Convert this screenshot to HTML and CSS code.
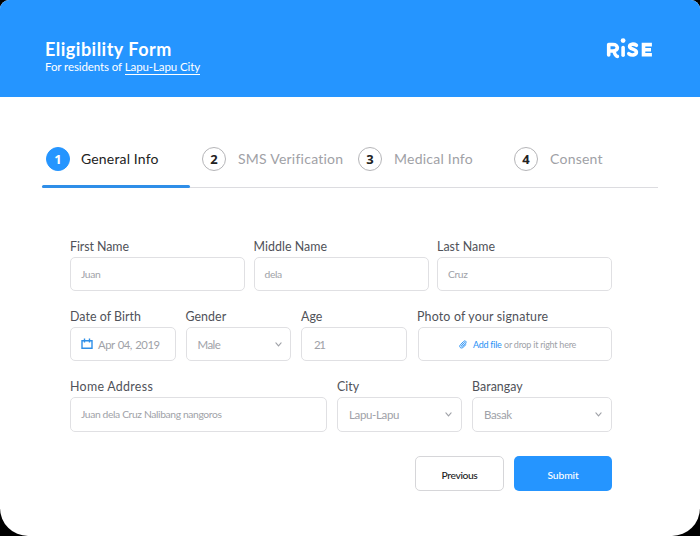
FILE: index.html
```html
<!DOCTYPE html>
<html lang="en">
<head>
<meta charset="utf-8">
<title>Eligibility Form</title>
<link rel="stylesheet" href="styles.css">
</head>
<body>
<div class="card">
  <header class="header">
    <div>
      <h1 class="title">Eligibility Form</h1>
      <p class="subtitle">For residents of <span class="place">Lapu-Lapu City</span></p>
    </div>
    <svg class="logo" width="48" height="22" viewBox="0 0 48 22" fill="none" stroke="#fff" stroke-width="3.6" stroke-linecap="round" stroke-linejoin="round" role="img" aria-label="RiSE">
      <path d="M3.7 17V6.5H8C13.8 6.5 13.8 13 8 13H3.8M9 13.5C9.8 16 10.6 18.4 12.4 18.4"/>
      <path d="M18.1 9.5V17.2"/>
      <circle cx="18.1" cy="2.6" r="2.4" fill="#fff" stroke="none"/>
      <path d="M31.4 7.3C28.9 5.6 24.6 5.7 24.6 8.6C24.6 11.5 31.4 10.8 31.4 14C31.4 17.3 26.6 17.8 23.8 15.7"/>
      <path stroke-linecap="butt" stroke-linejoin="miter" d="M46.9 6.6H38.5V16.7H46.9M38.5 11.7H46"/>
    </svg>
  </header>
  <nav class="steps">
    <div class="step active"><span class="num">1</span><span class="name">General Info</span></div>
    <div class="step"><span class="num">2</span><span class="name">SMS Verification</span></div>
    <div class="step"><span class="num">3</span><span class="name">Medical Info</span></div>
    <div class="step"><span class="num">4</span><span class="name">Consent</span></div>
  </nav>
  <form class="form">
    <div class="row names">
      <div class="field"><span class="label first">First Name</span><div class="box small">Juan</div></div>
      <div class="field"><span class="label">Middle Name</span><div class="box small">dela</div></div>
      <div class="field"><span class="label">Last Name</span><div class="box small">Cruz</div></div>
    </div>
    <div class="row details">
      <div class="field"><span class="label">Date of Birth</span><div class="box date">
        <svg width="12" height="12" viewBox="0 0 12 12" fill="none" stroke="#2e8fe8" stroke-width="1.4"><path d="M1 2.8H11V10.3H1ZM3.5 .6V4.4M8.5 .6V4.4"/></svg>
        <span>Apr 04, 2019</span></div></div>
      <div class="field"><span class="label">Gender</span><div class="box select"><span>Male</span><svg class="chevron" width="7" height="5" viewBox="0 0 7 5"><path d="M.9 .8L3.5 3.8L6.1 .8"/></svg></div></div>
      <div class="field"><span class="label">Age</span><div class="box age">21</div></div>
      <div class="field"><span class="label photo">Photo of your signature</span><div class="box drop">
        <svg width="8" height="9" viewBox="0 0 8 9" fill="none" stroke="#2690f5" stroke-width="1" stroke-linecap="round"><path d="M5.4 2.5L2.6 5.3C2 6.2 3 6.8 3.7 6.1L6.7 3.1C8 1.6 5.9 .1 4.7 1.4L1.5 4.6C-.5 6.8 2 9.2 4.1 7.3L7 4.5"/></svg>
        <span class="add">Add file</span><span>or drop it right here</span></div></div>
    </div>
    <div class="row address">
      <div class="field"><span class="label home">Home Address</span><div class="box small">Juan dela Cruz Nalibang nangoros</div></div>
      <div class="field"><span class="label">City</span><div class="box select"><span>Lapu-Lapu</span><svg class="chevron" width="7" height="5" viewBox="0 0 7 5"><path d="M.9 .8L3.5 3.8L6.1 .8"/></svg></div></div>
      <div class="field"><span class="label">Barangay</span><div class="box select"><span>Basak</span><svg class="chevron" width="7" height="5" viewBox="0 0 7 5"><path d="M.9 .8L3.5 3.8L6.1 .8"/></svg></div></div>
    </div>
    <div class="actions">
      <button type="button" class="btn previous">Previous</button>
      <button type="button" class="btn submit">Submit</button>
    </div>
  </form>
</div>
</body>
</html>
```
FILE: styles.css
```css
* { box-sizing: border-box; }
body { margin: 0; background: #000; font-family: Lato, sans-serif; }
.card { width: 700px; height: 536px; background: #fff; border-radius: 9px 9px 28px 28px; overflow: hidden; }
.header { height: 97px; background: #2595ff; color: #fff; padding: 38px 47px 0 45px; display: flex; justify-content: space-between; align-items: flex-start; }
.title { margin: 0; font-size: 18px; line-height: 22px; font-weight: 700; letter-spacing: .49px; }
.subtitle { margin: 0; font-size: 11.5px; line-height: 14px; letter-spacing: -.09px; }
.place { display: inline-block; border-bottom: 1px solid #fff; height: 15px; }
.logo { display: block; }
.steps { margin: 40px 42px 0 42px; height: 51px; display: grid; grid-template-columns: 156px 156px 156px 1fr; align-items: start; padding: 10px 0 0 4px; background: linear-gradient(#dcdce0, #dcdce0) 0 50px / 100% 1px no-repeat; position: relative; }
.steps::after { content: ""; position: absolute; left: 0; top: 48px; width: 148px; height: 3px; border-radius: 2px; background: #2f8ee8; }
.step { display: flex; align-items: center; gap: 12px; height: 24px; color: #a0a1a6; white-space: nowrap; }
.num { flex: none; width: 24px; height: 24px; border: 1px solid #b5b5b8; border-radius: 50%; color: #222; font: 700 13px/22px "Noto Sans", sans-serif; text-align: center; }
.name { font-size: 14px; line-height: 16px; margin-top: -1px; letter-spacing: .24px; }
.active { color: #222; gap: 11px; }
.active .name { letter-spacing: .16px; }
.active .num { background: #2595ff; border-color: #2595ff; color: #fff; }
.form { padding: 50px 88px 0 70px; }
.row { display: grid; margin-bottom: 17px; }
.names { grid-template-columns: 175px 175px 175px; column-gap: 8.5px; }
.details { grid-template-columns: 105.5px 105.5px 106px 195px; column-gap: 10px; }
.address { grid-template-columns: 257px 125px 140px; column-gap: 10px; margin-bottom: 24px; }
.label { display: block; height: 19px; line-height: 17px; font-size: 12.4px; letter-spacing: .05px; color: #505259; white-space: nowrap; }
.first { letter-spacing: -.07px; }
.home { letter-spacing: .3px; }
.photo { letter-spacing: .18px; }
.box { height: 34px; border: 1px solid #e0e0e3; border-radius: 5px; padding: 0 10px; display: flex; align-items: center; color: #a0a2a8; font-size: 11.5px; letter-spacing: -.35px; white-space: nowrap; }
.address .box { height: 35px; }
.small { font-size: 10.3px; letter-spacing: -.37px; }
.address .small { padding-bottom: 1px; }
.date { gap: 5px; letter-spacing: -.5px; word-spacing: 1px; font-size: 11.3px; }
.select { justify-content: space-between; padding: 0 8px 0 11px; }
.details .select { letter-spacing: -.6px; }
.address .select { padding-right: 9px; }
.age { padding-left: 12px; letter-spacing: -1.3px; }
.chevron { fill: none; stroke: #a0a2a8; stroke-width: 1.1; stroke-linecap: round; }
.drop { margin-left: .5px; padding: 0 0 0 6px; justify-content: center; font-size: 9px; letter-spacing: -.24px; gap: 2.5px; }
.drop svg { margin-right: 3px; }
.add { color: #2690f5; letter-spacing: -.25px; }
.actions { display: flex; justify-content: flex-end; gap: 10px; }
.btn { height: 35px; border-radius: 5px; font: 500 10.3px Lato, sans-serif; letter-spacing: -.4px; padding: 2px 0 0; }
.previous { width: 89px; border: 1px solid #d6d6d9; background: #fff; color: #222; }
.submit { width: 98px; border: 0; background: #2595ff; color: #fff; letter-spacing: -.1px; }
```
